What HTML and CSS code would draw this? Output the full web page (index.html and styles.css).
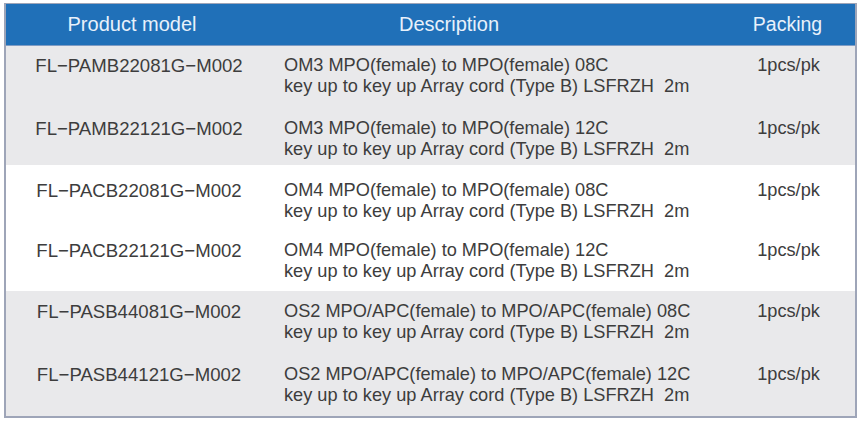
FILE: index.html
```html
<!DOCTYPE html>
<html>
<head>
<meta charset="utf-8">
<link rel="stylesheet" href="styles.css">
</head>
<body>
<div class="wrap">
  <div class="table">
    <div class="head">
      <div class="h-model">Product model</div>
      <div class="h-desc">Description</div>
      <div class="h-pack">Packing</div>
    </div>
    <div class="group grey">
      <div class="row r1">
        <div class="model">FL−PAMB22081G−M002</div>
        <div class="desc d1">OM3 MPO(female) to MPO(female) 08C<br>key up to key up Array cord (Type B) LSFRZH&nbsp; 2m</div>
        <div class="pack">1pcs/pk</div>
      </div>
      <div class="row r2">
        <div class="model">FL−PAMB22121G−M002</div>
        <div class="desc">OM3 MPO(female) to MPO(female) 12C<br>key up to key up Array cord (Type B) LSFRZH&nbsp; 2m</div>
        <div class="pack">1pcs/pk</div>
      </div>
    </div>
    <div class="group white">
      <div class="row r3">
        <div class="model">FL−PACB22081G−M002</div>
        <div class="desc">OM4 MPO(female) to MPO(female) 08C<br>key up to key up Array cord (Type B) LSFRZH&nbsp; 2m</div>
        <div class="pack">1pcs/pk</div>
      </div>
      <div class="row r4">
        <div class="model">FL−PACB22121G−M002</div>
        <div class="desc">OM4 MPO(female) to MPO(female) 12C<br>key up to key up Array cord (Type B) LSFRZH&nbsp; 2m</div>
        <div class="pack">1pcs/pk</div>
      </div>
    </div>
    <div class="group grey">
      <div class="row r5">
        <div class="model">FL−PASB44081G−M002</div>
        <div class="desc">OS2 MPO/APC(female) to MPO/APC(female) 08C<br>key up to key up Array cord (Type B) LSFRZH&nbsp; 2m</div>
        <div class="pack">1pcs/pk</div>
      </div>
      <div class="row r6">
        <div class="model">FL−PASB44121G−M002</div>
        <div class="desc">OS2 MPO/APC(female) to MPO/APC(female) 12C<br>key up to key up Array cord (Type B) LSFRZH&nbsp; 2m</div>
        <div class="pack">1pcs/pk</div>
      </div>
    </div>
  </div>
</div>
</body>
</html>
```

FILE: styles.css
```css
html, body {
  margin: 0;
  padding: 0;
  background: #ffffff;
}
.wrap {
  padding: 3px 3px 0 4px;
}
.table {
  border: 1px solid #9ea5b8;
  border-width: 1px 2px 2px 2px;
  font-family: "Liberation Sans", Arial, sans-serif;
  font-size: 18.2px;
  line-height: 21px;
  color: #3d3d3d;
}
.head {
  display: grid;
  grid-template-columns: 270px 446px 1fr;
  height: 41px;
  align-items: center;
  background: #2070b8;
  color: #e8f1fb;
  font-size: 20px;
  border-bottom: 1px solid #7f9cc4;
}
.h-model {
  text-align: center;
  padding-right: 18px;
}
.h-desc {
  padding-left: 123px;
}
.h-pack {
  text-align: center;
  padding-right: 2px;
  font-size: 19.5px;
}
.grey {
  background: #e9e9eb;
}
.white {
  background: #ffffff;
}
.row {
  display: grid;
  grid-template-columns: 270px 446px 1fr;
  align-items: start;
  box-sizing: border-box;
}
.model {
  text-align: center;
  font-size: 18.6px;
  padding-right: 4px;
}
.desc {
  padding-left: 8px;
}
.pack {
  text-align: center;
  padding-left: 0;
}
.r1 { height: 63px; padding-top: 9px; }
.r2 { height: 56px; padding-top: 9px; }
.r3 { height: 60px; padding-top: 15px; }
.r4 { height: 66px; padding-top: 15px; }
.r5 { height: 63px; padding-top: 10px; }
.r6 { height: 62px; padding-top: 10px; }
```
